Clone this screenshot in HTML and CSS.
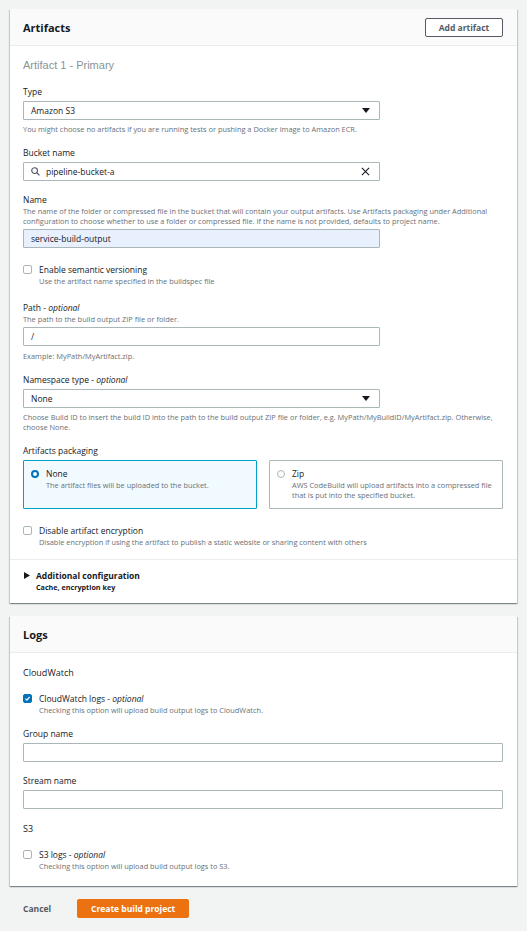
FILE: index.html
```html
<!DOCTYPE html>
<html lang="en">
<head>
  <meta charset="UTF-8">
  <meta name="viewport" content="width=device-width, initial-scale=1.0">
  <title>Create build project</title>
  <link rel="stylesheet" href="styles.css">
</head>
<body>
  <div class="card">
    <div class="card-header">
      <h2>Artifacts</h2>
      <button class="btn">Add artifact</button>
    </div>
    <div class="card-body">
      <h3 class="subhead">Artifact 1 - Primary</h3>

      <div class="field">
        <div class="label">Type</div>
        <div class="control narrow select">
          <span>Amazon S3</span>
          <svg class="caret" width="8" height="5" viewBox="0 0 8 5"><path d="M0 0h8L4 5z"/></svg>
        </div>
        <p class="hint spaced">You might choose no artifacts if you are running tests or pushing a Docker image to Amazon ECR.</p>
      </div>

      <div class="field">
        <div class="label">Bucket name</div>
        <div class="control narrow search">
          <svg class="icon" width="9" height="9" viewBox="0 0 10 10"><circle cx="4" cy="4" r="3.2"/><path d="M6.4 6.4L9.4 9.4"/></svg>
          <span>pipeline-bucket-a</span>
          <svg class="icon clear" width="9" height="9" viewBox="0 0 10 10"><path d="M1 1L9 9M9 1L1 9"/></svg>
        </div>
      </div>

      <div class="field">
        <div class="label">Name</div>
        <p class="hint">The name of the folder or compressed file in the bucket that will contain your output artifacts. Use Artifacts packaging under Additional configuration to choose whether to use a folder or compressed file. If the name is not provided, defaults to project name.</p>
        <div class="control narrow filled top-gap">service-build-output</div>
      </div>

      <div class="check-field">
        <span class="checkbox"></span>
        <div>
          <div class="check-title">Enable semantic versioning</div>
          <p class="hint">Use the artifact name specified in the buildspec file</p>
        </div>
      </div>

      <div class="field loose">
        <div class="label">Path - <em>optional</em></div>
        <p class="hint">The path to the build output ZIP file or folder.</p>
        <div class="control narrow top-gap">/</div>
        <p class="hint example">Example: MyPath/MyArtifact.zip.</p>
      </div>

      <div class="field">
        <div class="label">Namespace type - <em>optional</em></div>
        <div class="control narrow select">
          <span>None</span>
          <svg class="caret" width="8" height="5" viewBox="0 0 8 5"><path d="M0 0h8L4 5z"/></svg>
        </div>
        <p class="hint spaced">Choose Build ID to insert the build ID into the path to the build output ZIP file or folder, e.g. MyPath/MyBuildID/MyArtifact.zip. Otherwise, choose None.</p>
      </div>

      <div class="field">
        <div class="label">Artifacts packaging</div>
        <div class="tiles">
          <div class="tile selected">
            <span class="radio on"></span>
            <div>
              <div class="check-title">None</div>
              <p class="hint">The artifact files will be uploaded to the bucket.</p>
            </div>
          </div>
          <div class="tile">
            <span class="radio"></span>
            <div>
              <div class="check-title">Zip</div>
              <p class="hint">AWS CodeBuild will upload artifacts into a compressed file that is put into the specified bucket.</p>
            </div>
          </div>
        </div>
      </div>

      <div class="check-field">
        <span class="checkbox"></span>
        <div>
          <div class="check-title">Disable artifact encryption</div>
          <p class="hint">Disable encryption if using the artifact to publish a static website or sharing content with others</p>
        </div>
      </div>
    </div>

    <div class="expander">
      <div class="expander-title">
        <svg class="expander-caret" width="6" height="7" viewBox="0 0 6 7"><path d="M0 0L6 3.5L0 7z"/></svg>
        Additional configuration
      </div>
      <p class="expander-sub">Cache, encryption key</p>
    </div>
  </div>

  <div class="card">
    <div class="card-header">
      <h2>Logs</h2>
    </div>
    <div class="card-body bottom">
      <div class="group-title first">CloudWatch</div>

      <div class="check-field">
        <span class="checkbox checked">
          <svg width="9" height="9" viewBox="0 0 10 10"><path d="M2 5.2L4.2 7.4L8 2.8"/></svg>
        </span>
        <div>
          <div class="check-title">CloudWatch logs - <em>optional</em></div>
          <p class="hint">Checking this option will upload build output logs to CloudWatch.</p>
        </div>
      </div>

      <div class="field">
        <div class="label">Group name</div>
        <div class="control"></div>
      </div>

      <div class="field">
        <div class="label">Stream name</div>
        <div class="control"></div>
      </div>

      <div class="group-title">S3</div>

      <div class="check-field">
        <span class="checkbox"></span>
        <div>
          <div class="check-title">S3 logs - <em>optional</em></div>
          <p class="hint">Checking this option will upload build output logs to S3.</p>
        </div>
      </div>
    </div>
  </div>

  <div class="actions">
    <button class="link-btn">Cancel</button>
    <button class="primary-btn">Create build project</button>
  </div>
</body>
</html>
```

FILE: styles.css
```css
body {
  margin: 0;
  padding: 9px 10px 0;
  background-color: #f2f3f3;
  font-family: 'Open Sans', 'Noto Sans', sans-serif;
  color: #16191f;
}
p {
  margin: 0;
}
.card {
  background: #fff;
  box-shadow: 0 1px 1px 0 rgba(0, 28, 36, 0.3), 1px 1px 1px 0 rgba(0, 28, 36, 0.15), -1px 1px 1px 0 rgba(0, 28, 36, 0.15);
}
.card + .card {
  margin-top: 13px;
}
.card-header {
  height: 37px;
  box-sizing: border-box;
  padding: 0 14px 0 13px;
  background: #fafafa;
  border-bottom: 1px solid #eaeded;
  display: flex;
  align-items: center;
  justify-content: space-between;
}
.card-header h2 {
  margin: 0;
  font-size: 11px;
  font-weight: 700;
}
.btn {
  width: 78px;
  height: 19px;
  padding: 0;
  font-family: inherit;
  font-size: 8.5px;
  font-weight: 700;
  color: #545b64;
  background: #fff;
  border: 1px solid #545b64;
  border-radius: 2px;
}
.card-body {
  padding: 12px 14px 12px 13px;
}
.card-body.bottom {
  padding-top: 13px;
  padding-bottom: 15px;
}
.subhead {
  margin: 0;
  font-family: 'Liberation Sans', Arial, sans-serif;
  font-size: 11px;
  font-weight: 400;
  line-height: 15px;
  color: #879596;
}
.field {
  margin-top: 12px;
}
.field.loose {
  margin-top: 15px;
}
.label {
  font-size: 8.5px;
  line-height: 13px;
  margin-bottom: 3px;
}
.label + .hint {
  margin-top: -3px;
}
em {
  font-style: italic;
}
.hint {
  font-size: 7.4px;
  line-height: 10px;
  color: #687078;
}
.hint.spaced {
  margin-top: 4px;
}
.hint.example {
  margin-top: 5px;
}
.control {
  height: 19px;
  box-sizing: border-box;
  border: 1px solid #aab7b8;
  border-radius: 1px;
  padding: 0 8px 0 7px;
  display: flex;
  align-items: center;
  gap: 6px;
  font-size: 8.5px;
  background: #fff;
}
.control.narrow {
  width: 357px;
}
.control.top-gap {
  margin-top: 3px;
}
.control.filled {
  background: #e8f0fe;
}
.select {
  justify-content: space-between;
  padding-right: 9px;
}
.caret {
  fill: #16191f;
}
.search {
  padding-right: 9px;
}
.icon {
  fill: none;
  stroke: #545b64;
  stroke-width: 1.3;
}
.icon.clear {
  margin-left: auto;
  stroke: #16191f;
  stroke-width: 1.2;
}
.check-field {
  margin-top: 15px;
  display: flex;
  gap: 7px;
}
.card-body.bottom .check-field {
  margin-top: 13px;
}
.check-title {
  font-size: 8.5px;
  line-height: 13px;
}
.checkbox {
  width: 9px;
  height: 9px;
  margin-top: 2px;
  flex: none;
  box-sizing: border-box;
  border: 1px solid #aab7b8;
  border-radius: 2px;
  background: #fff;
}
.checkbox.checked {
  background: #0073bb;
  border-color: #0073bb;
  display: flex;
  align-items: center;
  justify-content: center;
}
.checkbox svg {
  fill: none;
  stroke: #fff;
  stroke-width: 1.8;
}
.tiles {
  display: grid;
  grid-template-columns: 1fr 1fr;
  gap: 12px;
}
.tile {
  display: flex;
  gap: 7px;
  padding: 6px 6px 8px 7px;
  border: 1px solid #aab7b8;
  border-radius: 1px;
  min-height: 49px;
  box-sizing: border-box;
}
.tile.selected {
  background: #f1faff;
  border-color: #00a1c9;
}
.radio {
  width: 8px;
  height: 8px;
  margin-top: 3px;
  flex: none;
  box-sizing: border-box;
  border: 1px solid #aab7b8;
  border-radius: 50%;
  background: #fff;
}
.radio.on {
  border: 2.5px solid #0073bb;
}
.expander {
  border-top: 1px solid #eaeded;
  padding: 9px 13px 11px;
}
.expander-title {
  display: flex;
  align-items: center;
  gap: 6px;
  font-size: 8.5px;
  font-weight: 700;
  line-height: 13px;
}
.expander-caret {
  fill: #16191f;
  margin-left: 1px;
}
.expander-sub {
  margin-left: 13px;
  font-size: 7.2px;
  font-weight: 700;
  line-height: 10px;
  color: #16191f;
}
.group-title {
  margin-top: 13px;
  font-size: 9px;
  line-height: 13px;
}
.group-title.first {
  margin-top: 0;
}
.actions {
  margin-top: 13px;
  padding-left: 13px;
  display: flex;
  align-items: center;
  gap: 26px;
}
.link-btn {
  padding: 0;
  border: none;
  background: none;
  font-family: inherit;
  font-size: 8.5px;
  font-weight: 700;
  color: #545b64;
}
.primary-btn {
  width: 112px;
  height: 19px;
  padding: 0;
  border: 1px solid #ec7211;
  border-radius: 2px;
  background: #ec7211;
  color: #fff;
  font-family: inherit;
  font-size: 8.5px;
  font-weight: 700;
}
```
